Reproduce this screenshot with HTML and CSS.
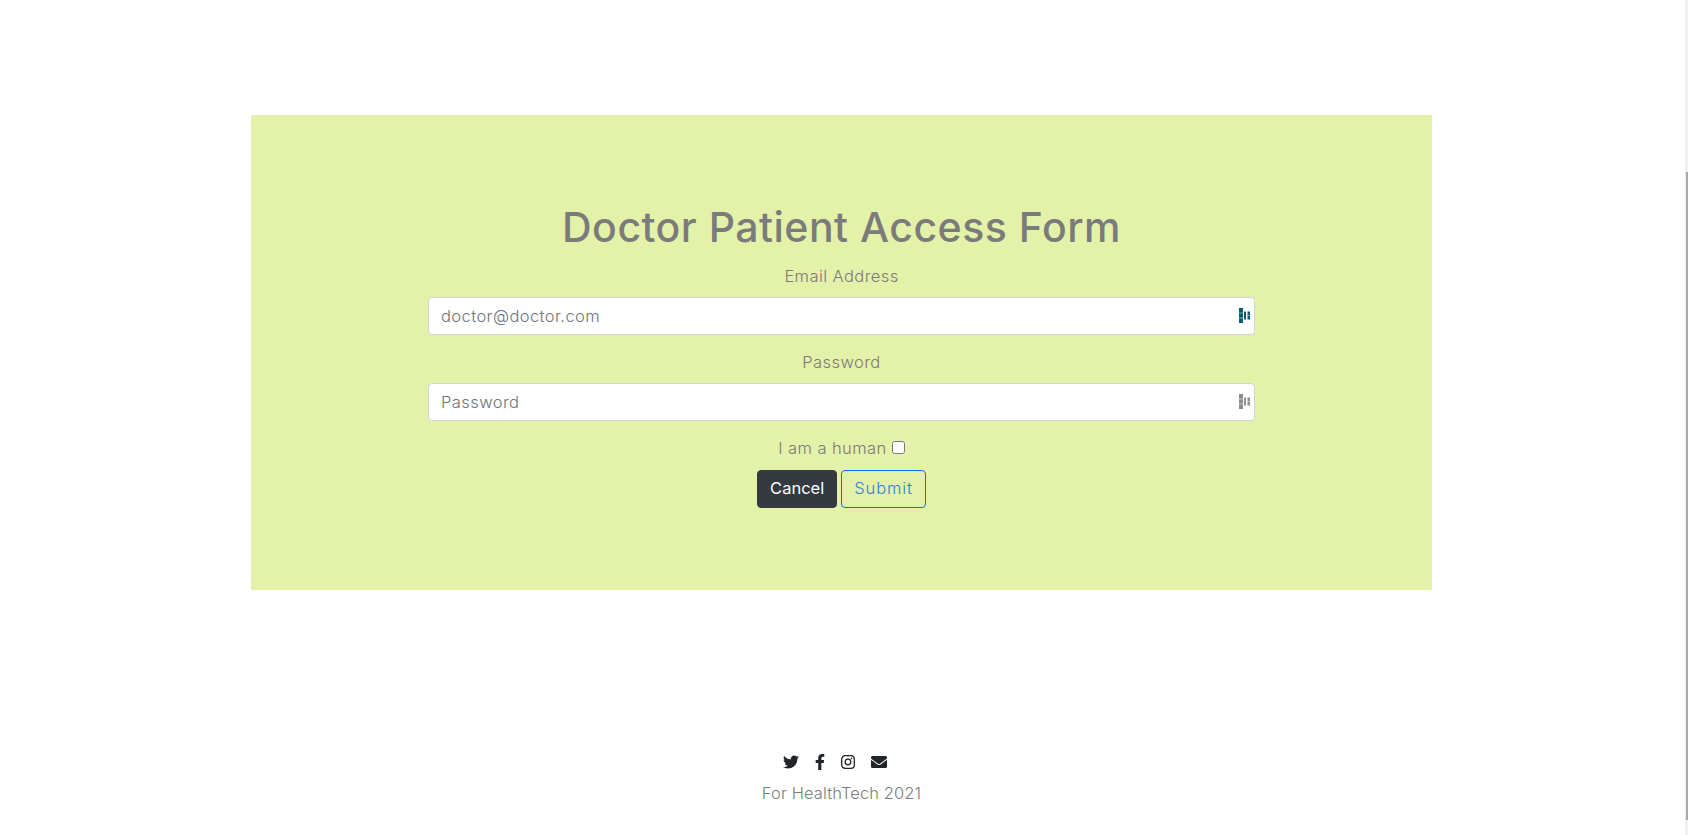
FILE: index.html
```html
<!DOCTYPE html>
<html lang="en">
<head>
<meta charset="utf-8">
<title>Doctor Patient Access Form</title>
<link rel="stylesheet" href="styles.css">
</head>
<body>
<div class="scrollbar"><div class="thumb"></div></div>
<main class="page">
  <section class="panel">
    <h1 class="title">Doctor Patient Access Form</h1>
    <form class="form">
      <label class="label" for="email">Email Address</label>
      <div class="field">
        <input class="input" id="email" type="text" placeholder="doctor@doctor.com">
        <svg class="key key-on" viewBox="0 0 11 15" width="11" height="15"><path d="M0 0h4v4.700H0zM0 5.300h4v4.400H0zM0 10.300h4V15H0zM5 3.500h2v8H5zM8.500 3.500h2.500v3.700H8.500zM8.500 7.800h2.500v3.700H8.500z"/></svg>
      </div>
      <label class="label" for="password">Password</label>
      <div class="field">
        <input class="input" id="password" type="password" placeholder="Password">
        <svg class="key key-off" viewBox="0 0 11 15" width="11" height="15"><path d="M0 0h4v4.700H0zM0 5.300h4v4.400H0zM0 10.300h4V15H0zM5 3.500h2v8H5zM8.500 3.500h2.500v3.700H8.500zM8.500 7.800h2.500v3.700H8.500z"/></svg>
      </div>
      <div class="human"><label for="human">I am a human</label> <input class="check" id="human" type="checkbox"></div>
      <div class="actions">
        <button class="btn btn-dark" type="button">Cancel</button>
        <button class="btn btn-outline" type="button">Submit</button>
      </div>
    </form>
  </section>
  <footer class="footer">
    <div class="social">
      <svg class="icon" width="16" height="16" viewBox="0 0 512 512"><path d="M459 152c.3 4.500.3 9.100.3 13.600 0 138.700-105.600 298.600-298.600 298.600-59.500 0-114.700-17.200-161.100-47.100 8.400 1 16.600 1.300 25.300 1.300 49.100 0 94.200-16.600 130.300-44.800-46.100-1-84.800-31.200-98.100-72.800 6.500 1 13 1.600 19.800 1.600 9.400 0 18.800-1.300 27.600-3.600-48.100-9.700-84.100-52-84.100-103v-1.300c14 7.800 30.200 12.700 47.400 13.300-28.300-18.800-46.800-51-46.800-87.400 0-19.500 5.200-37.400 14.300-53 51.700 63.700 129.300 105.300 216.400 109.800-1.600-7.800-2.600-15.900-2.600-24 0-57.800 46.800-104.900 104.900-104.900 30.200 0 57.500 12.700 76.700 33.100 23.700-4.500 46.500-13.300 66.600-25.300-7.800 24-24.400 44.200-46.100 57.200 21.100-2.300 41.600-8.100 60.400-16.200-14.300 20.800-32.200 39.300-52.600 54.300z"/></svg>
      <svg class="icon" width="10" height="16" viewBox="0 0 320 512"><path d="M279 288l14-93h-89v-60c0-25 13-50 52-50h41V6s-37-6-72-6c-74 0-122 44-122 125v70H22v93h81v224h100V288z"/></svg>
      <svg class="icon" width="14" height="16" viewBox="0 0 14 16"><rect x=".7" y="1.700" width="12.600" height="12.600" rx="3.400" fill="none" stroke="currentColor" stroke-width="1.300"/><circle cx="7" cy="8" r="2.800" fill="none" stroke="currentColor" stroke-width="1.300"/><circle cx="10.600" cy="4.400" r=".8"/></svg>
      <svg class="icon" width="16" height="16" viewBox="0 0 512 512"><path d="M502 191c4-3 10 0 10 5v204c0 26-22 48-48 48H48c-26 0-48-22-48-48V196c0-5 6-8 10-5 22 17 52 39 154 113 21 15 57 48 92 48s72-33 92-48c102-74 132-96 154-113zM256 320c23 0 57-29 73-41 133-97 143-105 174-129 6-5 9-12 9-19v-19c0-26-22-48-48-48H48C22 64 0 86 0 112v19c0 7 3 14 9 19 31 24 41 32 174 129 16 12 50 41 73 41z"/></svg>
    </div>
    <p class="credit">For HealthTech 2021</p>
  </footer>
</main>
</body>
</html>
```
FILE: styles.css
```css
* { box-sizing: border-box; }
html, body { margin: 0; height: 100%; overflow: hidden; }
body { background: #fff; font-family: "Inter", "Liberation Sans", sans-serif; font-weight: 300; font-size: 16.5px; letter-spacing: .42px; color: #7a7a7a; }
.page { display: flex; flex-direction: column; align-items: center; padding: 115px 256px 0 0; }
.panel { width: 1181px; height: 475px; background: #e4f1a8; margin-left: 251px; display: flex; flex-direction: column; align-items: center; padding-top: 88px; }
.title { margin: 0 0 13px; font-size: 41px; font-weight: 500; line-height: 48px; color: #7b7b7b; letter-spacing: .5px; }
.form { width: 827px; display: flex; flex-direction: column; align-items: center; }
.label { line-height: 24px; margin-bottom: 9px; }
.field { position: relative; width: 100%; margin-bottom: 15px; }
.input { display: block; width: 100%; height: 38px; padding: 6px 12px; font: inherit; letter-spacing: inherit; border: 1px solid #ced4da; border-radius: 4px; background: #fff; color: #495057; }
.input::placeholder { color: #6c757d; opacity: 1; }
.key { position: absolute; right: 5px; top: 11px; }
.key-on { fill: #0b5c6b; }
.key-off { fill: #8d8d8d; }
.human { line-height: 24px; margin-bottom: 10px; }
.check { margin: 0; width: 13px; height: 13px; }
.actions { display: flex; gap: 4px; }
.btn { height: 38px; padding: 5px 12px 7px; font: inherit; border-radius: 4px; border: 1px solid; }
.btn-dark { background: #343a40; border-color: #343a40; color: #fff; font-weight: 400; letter-spacing: 0; }
.btn-outline { background: transparent; border-color: #0d6efd; color: #2f7fe0; letter-spacing: .9px; }
.footer { margin-top: 164px; display: flex; flex-direction: column; align-items: center; margin-left: 251px; width: 1181px; }
.social { display: flex; gap: 16px; align-items: center; color: #212529; height: 16px; padding-right: 13px; }
.icon { fill: currentColor; display: block; }
.credit { margin: 11px 0 0; line-height: 24px; color: #7d7d7d; letter-spacing: .1px; }
.scrollbar { position: fixed; right: 0; top: 0; bottom: 0; width: 3px; background: #f1f1f1; }
.thumb { position: absolute; top: 172px; right: 0; width: 2px; bottom: 15px; background: #a8a8a8; }
```
